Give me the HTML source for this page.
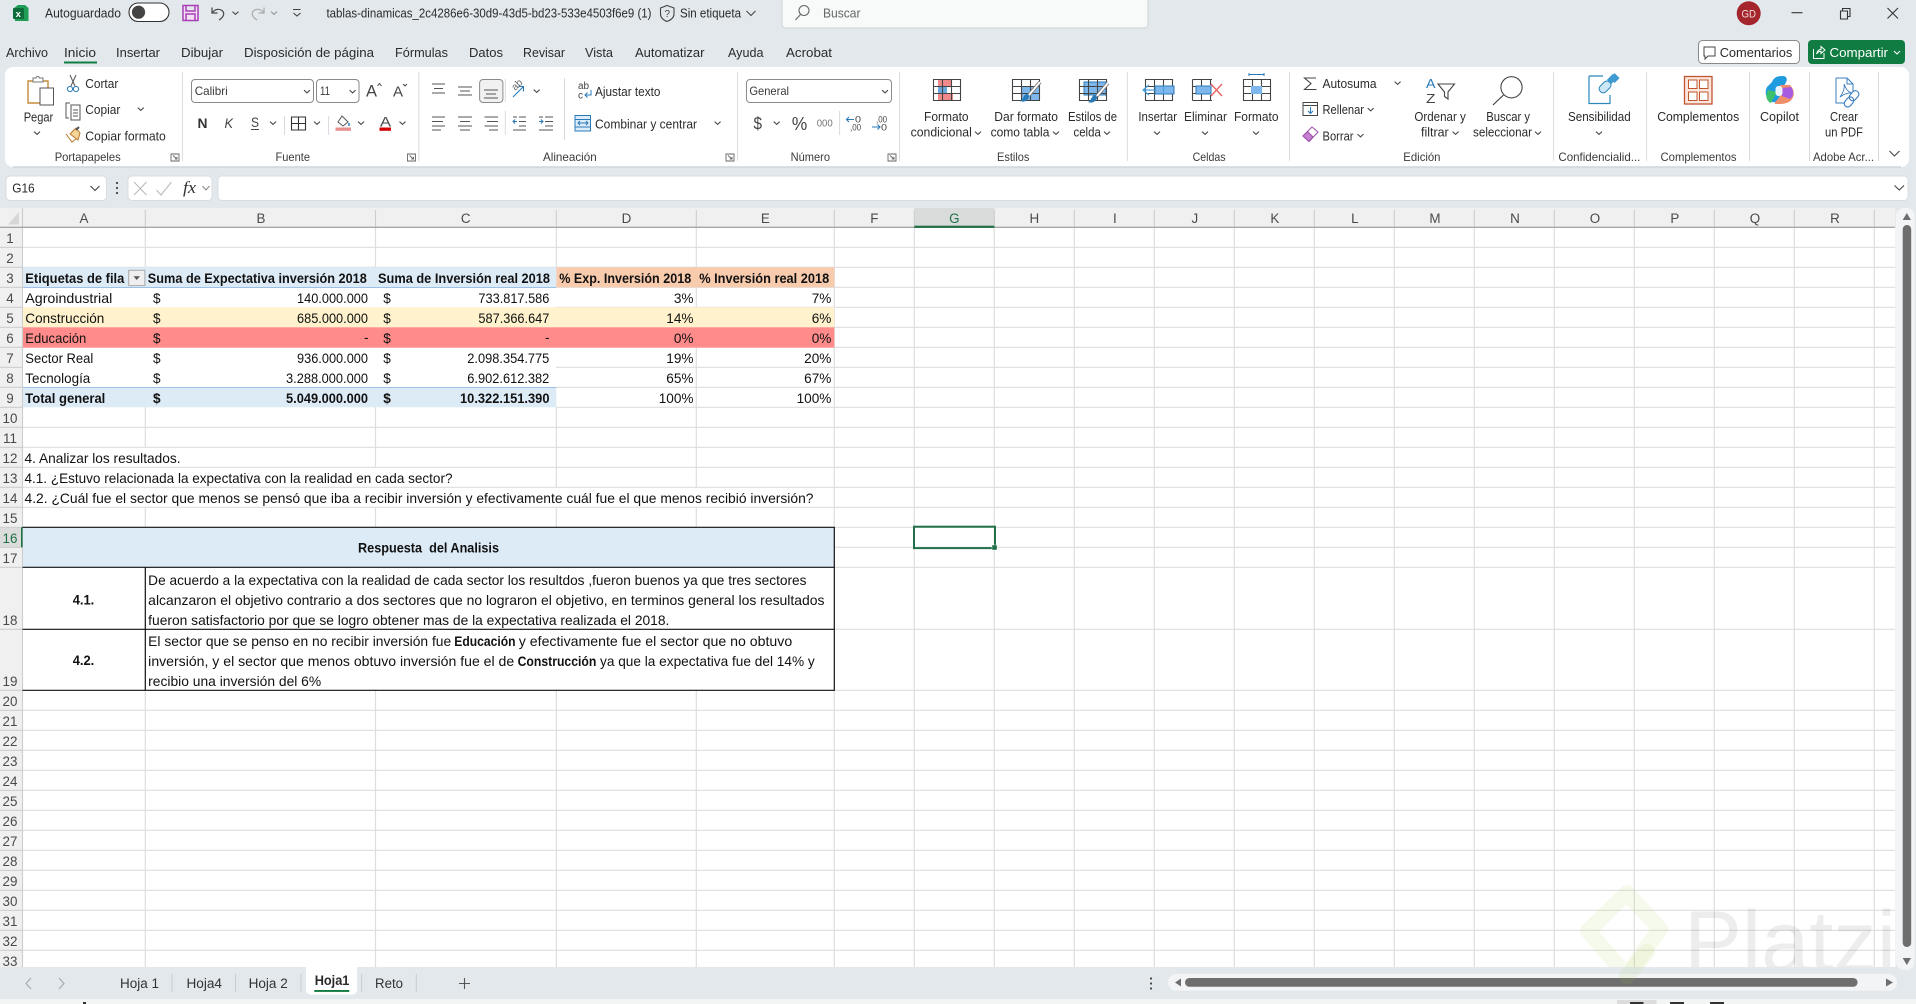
<!DOCTYPE html>
<html lang="es"><head><meta charset="utf-8"><title>Excel</title>
<style>
html,body{margin:0;padding:0;background:#e2e8ec;overflow:hidden}
svg{display:block}
text{font-family:"Liberation Sans",sans-serif;white-space:pre}
.u{font-size:12.6px;fill:#2b2b2b}
.m{font-size:13px;fill:#2b2b2b}
.g{font-size:12px;fill:#3a3a3a}
.c{font-size:13.6px;fill:#111}
.b{font-size:13.6px;fill:#111;font-weight:bold}
.h{font-size:13.4px;fill:#4a4a4a;text-anchor:middle}
.t{font-size:13.4px;fill:#333}
.ln{fill:none;stroke:#555;stroke-width:1}
</style></head><body>
<svg xmlns="http://www.w3.org/2000/svg" width="1916" height="1004" viewBox="0 0 1916 1004">
<defs><path id="ch" d="M-3-1.4 0 1.4 3-1.4" fill="none" stroke="#444" stroke-width="1.1"/>
<path id="dl" d="M0 0H8V7H0ZM2 1.5 6 5M6 2.8V5H3.8" fill="none" stroke="#666" stroke-width=".9"/>
<path id="gr" d="M.5.5H27.5V21.5H.5ZM.5 7.5H27.5M.5 14.5H27.5M9.5.5V21.5M18.5.5V21.5" fill="none" stroke="#444" stroke-width="1.1"/></defs>
<rect width="1916" height="1004" fill="#e2e8ec"/>

<!-- title bar -->
<path d="M14 8 18 5H25L28.5 8V21H15Z" fill="#1f9d57"/><rect x="13" y="8" width="11" height="11" rx="1" fill="#0f6b3a"/><text x="15.6" y="17" font-size="9.5" font-weight="bold" fill="#fff">x</text>
<text class="u" x="45" y="17.5" textLength="76" lengthAdjust="spacingAndGlyphs">Autoguardado</text>
<rect x="129" y="3" width="40" height="18.5" rx="9.2" fill="#fff" stroke="#333" stroke-width="1.1"/><circle cx="138.5" cy="12.2" r="6.6" fill="#444"/>
<path d="M183 5.5H198V20.5H183ZM186 5.5V11H195V5.5M186 20.5V14H195V20.5" fill="#f5e0f5" stroke="#a93fb8" stroke-width="1.5"/>
<path d="M212 7.5V13H217.5M212.5 12.5C215 9 219 8.5 222 10.5 225 13 224 17 219 20" fill="none" stroke="#444" stroke-width="1.2"/><use href="#ch" x="235.5" y="13"/>
<path d="M264 7.5V13H258.5M263.5 12.5C261 9 257 8.5 254 10.5 251 13 252 17 257 20" fill="none" stroke="#aaa" stroke-width="1.2"/><use href="#ch" x="274" y="13" opacity=".5"/>
<path d="M293 9.5H300.5M293.5 13 297 16 300.5 13" fill="none" stroke="#444" stroke-width="1.1"/>
<text class="u" x="326.5" y="17.5" textLength="325" lengthAdjust="spacingAndGlyphs">tablas-dinamicas_2c4286e6-30d9-43d5-bd23-533e4503f6e9 (1)</text>
<path d="M667 5.5 674 8V14C674 17.5 671 20 667 21.5 663 20 660.5 17.5 660.5 14V8Z" fill="none" stroke="#444" stroke-width="1.1"/><text x="664.5" y="17" font-size="10" fill="#444">?</text>
<text class="u" x="680" y="17.5" textLength="61" lengthAdjust="spacingAndGlyphs">Sin etiqueta</text>
<path d="M746.5 11 751 15.5 755.5 11" fill="none" stroke="#444" stroke-width="1.1"/>
<rect x="782" y="-6" width="366" height="34" rx="4" fill="#f8f9f9" stroke="#d0d5d8"/>
<circle cx="804" cy="10.5" r="5" fill="none" stroke="#666" stroke-width="1.1"/><path d="M800.5 14.5 795.5 20" stroke="#666" stroke-width="1.1"/>
<text class="u" x="823" y="17.5" textLength="37.5" lengthAdjust="spacingAndGlyphs" style="fill:#666">Buscar</text>
<circle cx="1748.7" cy="13.3" r="12" fill="#a4262c"/><text x="1741.5" y="17.5" font-size="11" fill="#f0dcdc" textLength="14.5" lengthAdjust="spacingAndGlyphs">GD</text>
<path d="M1791.5 12.7H1802.5" stroke="#333" stroke-width="1.1"/>
<path d="M1840.5 11H1847.5V19H1840.5ZM1842.5 11V8.5H1850V16.5H1847.5" fill="none" stroke="#333" stroke-width="1.1"/>
<path d="M1887.5 8 1898 18.5M1898 8 1887.5 18.5" stroke="#333" stroke-width="1.1"/>

<!-- menu -->
<text class="m" x="6" y="57" textLength="42" lengthAdjust="spacingAndGlyphs">Archivo</text>
<text class="m" x="64" y="57" textLength="32" lengthAdjust="spacingAndGlyphs">Inicio</text>
<text class="m" x="116" y="57" textLength="44" lengthAdjust="spacingAndGlyphs">Insertar</text>
<text class="m" x="181" y="57" textLength="42" lengthAdjust="spacingAndGlyphs">Dibujar</text>
<text class="m" x="244" y="57" textLength="130" lengthAdjust="spacingAndGlyphs">Disposición de página</text>
<text class="m" x="395" y="57" textLength="53" lengthAdjust="spacingAndGlyphs">Fórmulas</text>
<text class="m" x="469" y="57" textLength="34" lengthAdjust="spacingAndGlyphs">Datos</text>
<text class="m" x="523" y="57" textLength="42" lengthAdjust="spacingAndGlyphs">Revisar</text>
<text class="m" x="585" y="57" textLength="28" lengthAdjust="spacingAndGlyphs">Vista</text>
<text class="m" x="635" y="57" textLength="69.5" lengthAdjust="spacingAndGlyphs">Automatizar</text>
<text class="m" x="728" y="57" textLength="35.5" lengthAdjust="spacingAndGlyphs">Ayuda</text>
<text class="m" x="786" y="57" textLength="46" lengthAdjust="spacingAndGlyphs">Acrobat</text>
<rect x="64" y="61.5" width="33" height="2" fill="#107c41"/>
<rect x="1698.5" y="40.5" width="101" height="23" rx="4" fill="#fff" stroke="#8a8a8a"/>
<path d="M1704 47H1715V56H1708L1705 59V56H1704Z" fill="none" stroke="#444" stroke-width="1"/>
<text class="m" x="1719.7" y="57" textLength="72.6" lengthAdjust="spacingAndGlyphs">Comentarios</text>
<rect x="1808" y="40" width="97" height="24" rx="4" fill="#107c41"/>
<path d="M1813.5 49V58.5H1824V53M1816.5 54C1817.5 50.5 1819 49.5 1821 49.2V46.5L1825 50 1821 53.5V51.2C1819 51.3 1817.5 52.3 1816.5 54Z" fill="none" stroke="#fff" stroke-width="1"/>
<text class="m" x="1829.5" y="57" textLength="58.5" lengthAdjust="spacingAndGlyphs" style="fill:#fff">Compartir</text>
<path d="M1894 51 1897 54 1900 51" fill="none" stroke="#fff" stroke-width="1.1"/>

<!-- ribbon -->
<rect x="5" y="67" width="1904" height="100" rx="8" fill="#fff"/>
<path d="M13 167H1901" stroke="#cfd6da" stroke-width="1.5"/>
<path d="M182.4 72V161M418.8 72V161M737.6 72V161M899.6 72V161M1127.3 72V161M1289.5 72V161M1553.6 72V161M1646.6 72V161M1749.5 72V161M1809.5 72V161M1878.5 72V161" stroke="#d8dbdd"/>
<path d="M505.3 79V102M505.3 111V135M564.5 78V140M284.5 116V135M328.6 116V135M839.6 111V135" stroke="#d8dbdd"/>

<!-- clipboard -->
<path d="M28 81H48V103H28Z" fill="#fff" stroke="#c58a3a" stroke-width="1.4"/><path d="M33 81V78H36C36.5 76 39 76 39.5 78H43V82H33Z" fill="#fff" stroke="#777"/>
<rect x="40" y="88" width="13.5" height="17" fill="#fff" stroke="#555"/>
<text class="u" x="23.7" y="121.5" textLength="29.5" lengthAdjust="spacingAndGlyphs">Pegar</text><use href="#ch" x="37" y="133"/>
<path d="M70 75 75 86M76 75 71 86" stroke="#555" fill="none"/><circle cx="70" cy="89" r="2.6" fill="none" stroke="#2a7ab8"/><circle cx="76" cy="89" r="2.6" fill="none" stroke="#2a7ab8"/>
<text class="u" x="85.3" y="88" textLength="33" lengthAdjust="spacingAndGlyphs">Cortar</text>
<path d="M70 103H66V118H69M71 105H80V120H71ZM73 110H78M73 113H78M73 116H78" fill="none" stroke="#555"/>
<text class="u" x="85.3" y="114.2" textLength="35" lengthAdjust="spacingAndGlyphs">Copiar</text><use href="#ch" x="140.8" y="109"/>
<path d="M76 128 70 134 78 140 80 133Z" fill="#f5d59a" stroke="#b9772a"/><path d="M66 134 72 142 76 139" fill="none" stroke="#b9772a"/><path d="M76 130 79 127" stroke="#555" stroke-width="2"/>
<text class="u" x="85.3" y="140.3" textLength="80.5" lengthAdjust="spacingAndGlyphs">Copiar formato</text>
<text class="g" x="54.7" y="161" textLength="66" lengthAdjust="spacingAndGlyphs">Portapapeles</text><use href="#dl" x="171" y="154"/>

<!-- font -->
<rect x="191.5" y="79.5" width="122" height="23" rx="3.5" fill="#fff" stroke="#8a8a8a"/>
<text class="g" x="194.7" y="95" textLength="33" lengthAdjust="spacingAndGlyphs">Calibri</text><use href="#ch" x="307" y="91.5"/>
<rect x="316.5" y="79.5" width="42.5" height="23" rx="3.5" fill="#fff" stroke="#8a8a8a"/>
<text class="g" x="320" y="95" textLength="10" lengthAdjust="spacingAndGlyphs">11</text><use href="#ch" x="352.6" y="91.5"/>
<text x="366" y="96.5" font-size="17" fill="#444" textLength="11" lengthAdjust="spacingAndGlyphs">A</text><path d="M377.5 86 379.5 83.5 381.5 86" fill="none" stroke="#444"/>
<text x="393" y="96.5" font-size="15" fill="#444" textLength="10" lengthAdjust="spacingAndGlyphs">A</text><path d="M403 84 405 86 407 84" fill="none" stroke="#444"/>
<text x="197.5" y="128" font-size="14" font-weight="bold" fill="#333" textLength="10" lengthAdjust="spacingAndGlyphs">N</text>
<text x="224.5" y="128" font-size="14" font-style="italic" fill="#444" textLength="8.5" lengthAdjust="spacingAndGlyphs">K</text>
<text x="251" y="127" font-size="14" fill="#444" textLength="8" lengthAdjust="spacingAndGlyphs">S</text><path d="M251 129.5H259" stroke="#444"/><use href="#ch" x="273" y="123"/>
<path d="M291.5 117H305.5V130H291.5ZM298.5 117V130M291.5 123.5H305.5" fill="none" stroke="#333" stroke-width="1.1"/><use href="#ch" x="317" y="123"/>
<path d="M342 116 348 122 343 126 338 122Z" fill="none" stroke="#555"/><path d="M349 123V126" stroke="#2a7ab8" stroke-width="1.5"/>
<rect x="335.5" y="127.5" width="15.5" height="3.3" fill="#e98f8f"/><use href="#ch" x="361" y="123"/>
<text x="380" y="126.5" font-size="14" fill="#444" textLength="11" lengthAdjust="spacingAndGlyphs">A</text><rect x="379.5" y="127.5" width="11.5" height="3.3" fill="#d40000"/>
<use href="#ch" x="402.5" y="123"/>
<text class="g" x="275.5" y="161" textLength="34.5" lengthAdjust="spacingAndGlyphs">Fuente</text><use href="#dl" x="407.5" y="154"/>

<!-- alignment -->
<rect x="479.6" y="79.5" width="23.3" height="23" rx="3.5" fill="#f1f1f1" stroke="#8a8a8a"/>
<path d="M432 85H445M434 89.5H443M432 94H445" class="ln" transform="translate(0 -1)"/>
<path d="M458 88H472M460 92H470M458 96H472" class="ln" transform="translate(0 -1)"/>
<path d="M484 90H498M486 94H496M484 98H498" class="ln"/>
<path d="M513 97 523 87M518.5 86.5H523.5V91.5" fill="none" stroke="#2a7ab8" stroke-width="1.1"/><text x="512" y="89" font-size="10" fill="#666" transform="rotate(-45 516 86)">ab</text>
<use href="#ch" x="536.7" y="91"/>
<path d="M432 117H445M432 121.5H443M432 126H445M432 130H441" class="ln"/>
<path d="M458 117H472M460 121.5H470M458 126H472M460 130H470" class="ln"/>
<path d="M484.5 117H498M487 121.5H498M484.5 126H498M489 130H498" class="ln"/>
<path d="M519 117H526M519 121.5H526M519 126H526M513 130H526" class="ln"/><path d="M517 121.5H513M515 119.5 513 121.5 515 123.5" fill="none" stroke="#2a7ab8"/><path d="M513 117H517" stroke="#555"/>
<path d="M545 117H553M545 121.5H553M545 126H553M539 130H553" class="ln"/><path d="M539 121.5H543M541 119.5 543 121.5 541 123.5" fill="none" stroke="#2a7ab8"/><path d="M539 117H543" stroke="#555"/>
<text x="578" y="89" font-size="10" fill="#444">ab</text><text x="578" y="98.5" font-size="10" fill="#444">c</text><path d="M591 90V95H585M587.5 92.5 585 95 587.5 97.5" fill="none" stroke="#2a7ab8"/>
<text class="u" x="595" y="96" textLength="65.4" lengthAdjust="spacingAndGlyphs">Ajustar texto</text>
<rect x="575" y="115.5" width="15.5" height="15.5" fill="#dcecf8" stroke="#2a7ab8"/><path d="M575 119.5H590.5M575 127H590.5M578 123H588M580 121 578 123 580 125M586 121 588 123 586 125" fill="none" stroke="#2a7ab8"/>
<text class="u" x="595" y="128.3" textLength="102" lengthAdjust="spacingAndGlyphs">Combinar y centrar</text><use href="#ch" x="717.6" y="123"/>
<text class="g" x="543" y="161" textLength="53.7" lengthAdjust="spacingAndGlyphs">Alineación</text><use href="#dl" x="726" y="154"/>

<!-- number -->
<rect x="746.5" y="79.5" width="145" height="23" rx="3.5" fill="#fff" stroke="#8a8a8a"/>
<text class="g" x="749.4" y="95" textLength="39.6" lengthAdjust="spacingAndGlyphs">General</text><use href="#ch" x="885" y="91.5"/>
<text x="753.5" y="129.5" font-size="17.5" fill="#444" textLength="8.5" lengthAdjust="spacingAndGlyphs">$</text><use href="#ch" x="776.7" y="123"/>
<text x="791.8" y="130" font-size="18" fill="#444" textLength="15.5" lengthAdjust="spacingAndGlyphs">%</text>
<text x="816.7" y="126.5" font-size="10" fill="#777" textLength="16" lengthAdjust="spacingAndGlyphs">000</text>
<text x="855" y="122.5" font-size="9" fill="#444" textLength="6" lengthAdjust="spacingAndGlyphs">0</text><text x="850" y="130.5" font-size="9" fill="#444" textLength="11" lengthAdjust="spacingAndGlyphs">,00</text><path d="M854 119.5H846.5M849 117 846.5 119.5 849 122" fill="none" stroke="#2a7ab8" stroke-width="1.1"/>
<text x="876" y="122.5" font-size="9" fill="#444" textLength="11" lengthAdjust="spacingAndGlyphs">,00</text><text x="881" y="130.5" font-size="9" fill="#444" textLength="6" lengthAdjust="spacingAndGlyphs">0</text><path d="M872 127H880M877.5 124.5 880 127 877.5 129.5" fill="none" stroke="#2a7ab8" stroke-width="1.1"/>
<text class="g" x="790.6" y="161" textLength="39.4" lengthAdjust="spacingAndGlyphs">Número</text><use href="#dl" x="888" y="154"/>

<!-- styles -->
<g transform="translate(933 79)"><rect x="5" y="0" width="13" height="7" fill="#f08a8a"/><rect x="5" y="7" width="9" height="7" fill="#6aa8de"/><rect x="5" y="14" width="15" height="8" fill="#f08a8a"/><use href="#gr"/></g>
<text class="u" x="924" y="120.8" textLength="44.6" lengthAdjust="spacingAndGlyphs">Formato</text>
<text class="u" x="910.6" y="136.5" textLength="61.2" lengthAdjust="spacingAndGlyphs">condicional</text><use href="#ch" x="978" y="133"/>
<g transform="translate(1012 79)"><rect x="9" y="7" width="18" height="15" fill="#7db7ec"/><use href="#gr"/><path d="M28 3 17 16" stroke="#777" stroke-width="3.6" fill="none"/><path d="M28 3 17 16" stroke="#fff" stroke-width="1.8" fill="none"/><path d="M14 15C17 15 18 18 16 20 14 23 10 23 8 22 11 21 11 17 14 15Z" fill="#2a7ab8"/></g>
<text class="u" x="994.3" y="120.8" textLength="63.7" lengthAdjust="spacingAndGlyphs">Dar formato</text>
<text class="u" x="990.6" y="136.5" textLength="58.8" lengthAdjust="spacingAndGlyphs">como tabla</text><use href="#ch" x="1056" y="133"/>
<g transform="translate(1079 79)"><rect x="5" y="3" width="22" height="13" fill="#7db7ec" stroke="#2a7ab8"/><use href="#gr"/><path d="M29 4 18 17" stroke="#777" stroke-width="3.6" fill="none"/><path d="M29 4 18 17" stroke="#fff" stroke-width="1.8" fill="none"/><path d="M15 16C18 16 19 19 17 21 15 24 11 24 9 23 12 22 12 18 15 16Z" fill="#2a7ab8"/></g>
<text class="u" x="1068" y="120.8" textLength="49" lengthAdjust="spacingAndGlyphs">Estilos de</text>
<text class="u" x="1073.5" y="136.5" textLength="27.3" lengthAdjust="spacingAndGlyphs">celda</text><use href="#ch" x="1107" y="133"/>
<text class="g" x="997" y="161" textLength="32.4" lengthAdjust="spacingAndGlyphs">Estilos</text>

<!-- cells -->
<g transform="translate(1145 79)"><use href="#gr"/><rect x="10" y="7" width="19" height="8" fill="#7db7ec" stroke="#2a7ab8"/><path d="M18.5 7V15M9.5 11H-1M4 6-2 11 4 16" fill="none" stroke="#4aa3e0" stroke-width="1.3"/></g>
<text class="u" x="1138.4" y="121" textLength="38.6" lengthAdjust="spacingAndGlyphs">Insertar</text><use href="#ch" x="1157" y="133"/>
<g transform="translate(1192 79)"><path d="M.5.5H20M.5 21.5H20M.5.5V21.5M.5 7.5H4M.5 14.5H4M9.5.5V21.5M18.5.5V6M18.5 16V21.5" fill="none" stroke="#444" stroke-width="1.1"/><rect x="4" y="7" width="15" height="8" fill="#7db7ec" stroke="#2a7ab8"/><path d="M19 5 30 17M30 5 19 17" stroke="#e86060" stroke-width="1.3"/></g>
<text class="u" x="1184" y="121" textLength="43" lengthAdjust="spacingAndGlyphs">Eliminar</text><use href="#ch" x="1205" y="133"/>
<g transform="translate(1243 79)"><use href="#gr"/><rect x="8" y="7" width="11" height="8" fill="#7db7ec"/></g><path d="M1249 73V76M1249 74.5H1264M1264 73V76" stroke="#2a7ab8" fill="none"/>
<text class="u" x="1234" y="121" textLength="44.5" lengthAdjust="spacingAndGlyphs">Formato</text><use href="#ch" x="1256" y="133"/>
<text class="g" x="1192.6" y="161" textLength="33" lengthAdjust="spacingAndGlyphs">Celdas</text>

<!-- editing -->
<path d="M1316 78H1304.5L1311 83.5 1304.5 89.5H1316.5" fill="none" stroke="#444" stroke-width="1.1"/>
<text class="u" x="1322.5" y="88" textLength="54" lengthAdjust="spacingAndGlyphs">Autosuma</text><use href="#ch" x="1397.6" y="83"/>
<rect x="1303" y="102.5" width="14.5" height="13" fill="#fff" stroke="#444"/><path d="M1303 105.5H1317.5" stroke="#444"/><path d="M1310.5 107V113.5M1308 111 1310.5 113.5 1313 111" fill="none" stroke="#2a7ab8" stroke-width="1.1"/>
<text class="u" x="1322.5" y="114.2" textLength="41.5" lengthAdjust="spacingAndGlyphs">Rellenar</text><use href="#ch" x="1370.7" y="109.5"/>
<path d="M1303 136 1312 127 1318 132 1309 141.5Z" fill="#fff" stroke="#9a4ea8"/><path d="M1303 136 1307.5 131.5 1313 137 1309 141.5Z" fill="#c77fd2" stroke="#9a4ea8"/>
<text class="u" x="1322.5" y="140.3" textLength="31" lengthAdjust="spacingAndGlyphs">Borrar</text><use href="#ch" x="1360.5" y="135.5"/>
<text x="1426" y="88" font-size="12.5" fill="#2a7ab8" textLength="9.5" lengthAdjust="spacingAndGlyphs">A</text><text x="1426" y="103" font-size="12.5" fill="#444" textLength="9.5" lengthAdjust="spacingAndGlyphs">Z</text>
<path d="M1438 84H1454.5L1448 92V99L1444.5 96.5V92Z" fill="none" stroke="#444" stroke-width="1.1"/>
<text class="u" x="1414.4" y="120.8" textLength="51.4" lengthAdjust="spacingAndGlyphs">Ordenar y</text>
<text class="u" x="1421" y="136.5" textLength="27.7" lengthAdjust="spacingAndGlyphs">filtrar</text><use href="#ch" x="1455.6" y="133"/>
<circle cx="1511.5" cy="87.3" r="10.6" fill="none" stroke="#444" stroke-width="1.1"/><path d="M1503.5 95 1493 105" stroke="#444" stroke-width="1.2"/>
<text class="u" x="1486.2" y="120.8" textLength="43.8" lengthAdjust="spacingAndGlyphs">Buscar y</text>
<text class="u" x="1473" y="136.5" textLength="59" lengthAdjust="spacingAndGlyphs">seleccionar</text><use href="#ch" x="1538" y="133"/>
<text class="g" x="1403.3" y="161" textLength="37.2" lengthAdjust="spacingAndGlyphs">Edición</text>

<!-- sensitivity -->
<path d="M1589 76H1603M1589 76V103.5H1610V95" fill="none" stroke="#2a88bc" stroke-width="1.2"/>
<g transform="rotate(45 1604 88)"><rect x="1600" y="80" width="8" height="13" rx="3.5" fill="#cde7f6" stroke="#2a88bc"/><rect x="1601" y="70" width="7" height="7" fill="#3d9bd0"/></g><rect x="1609" y="75" width="6" height="8" fill="#3d9bd0" transform="rotate(45 1612 79)"/>
<text class="u" x="1568" y="120.8" textLength="62.7" lengthAdjust="spacingAndGlyphs">Sensibilidad</text><use href="#ch" x="1599" y="133"/>
<text class="g" x="1558.4" y="161" textLength="82" lengthAdjust="spacingAndGlyphs">Confidencialid...</text>
<!-- add-ins -->
<rect x="1684.5" y="76.5" width="27.5" height="27.5" fill="#fbe6dc" stroke="#c0552f" stroke-width="1.3"/><rect x="1688.5" y="80" width="8.5" height="8.5" fill="#fff" stroke="#c0552f"/><rect x="1699.5" y="80" width="8.5" height="8.5" fill="#fff" stroke="#c0552f"/><rect x="1688.5" y="92" width="8.5" height="8.5" fill="#fff" stroke="#c0552f"/><rect x="1699.5" y="92" width="8.5" height="8.5" fill="#fff" stroke="#c0552f"/>
<text class="u" x="1657.2" y="120.8" textLength="82" lengthAdjust="spacingAndGlyphs">Complementos</text>
<text class="g" x="1660.5" y="161" textLength="76" lengthAdjust="spacingAndGlyphs">Complementos</text>
<!-- copilot -->
<path d="M1772 82C1774 77 1778 76 1783 76 1787 76 1788 80 1785 84L1778 100C1776 103 1771 103 1769 100 1765 96 1765 91 1767 87Z" fill="#1f9ce0"/><path d="M1768 90 1777 92 1771 103C1766 101 1765 95 1768 90Z" fill="#3fc06a"/><path d="M1780 85 1790 85C1794 89 1795 95 1792 99 1789 104 1782 104 1776 104 1772 104 1778 100 1780 96Z" fill="#f08e6a"/><path d="M1782 88 1791 87C1794 91 1794 96 1790 99L1782 96Z" fill="#a65be0"/><rect x="1775.5" y="86" width="7" height="10" rx="3" fill="#e9f4fb"/>
<text class="u" x="1760" y="120.8" textLength="39" lengthAdjust="spacingAndGlyphs">Copilot</text>
<!-- pdf -->
<path d="M1836 78H1847L1853 84V92M1836 78V103H1845M1847 78V84H1853" fill="none" stroke="#3a7fc2" stroke-width="1"/><path d="M1840 97C1843 93 1845 88 1844 84 1846 89 1848 92 1852 93 1848 92.5 1844 94 1840 97Z" fill="none" stroke="#3a7fc2" stroke-width=".9"/>
<rect x="1851" y="90" width="7" height="11" rx="3.5" fill="none" stroke="#3a7fc2" stroke-width="1.1" transform="rotate(40 1854 95)"/><rect x="1845.5" y="96.5" width="7" height="11" rx="3.5" fill="none" stroke="#3a7fc2" stroke-width="1.1" transform="rotate(40 1849 102)"/>
<text class="u" x="1830" y="120.8" textLength="28" lengthAdjust="spacingAndGlyphs">Crear</text>
<text class="u" x="1825" y="136.5" textLength="38" lengthAdjust="spacingAndGlyphs">un PDF</text>
<text class="g" x="1813" y="161" textLength="61" lengthAdjust="spacingAndGlyphs">Adobe Acr...</text>
<path d="M1889.5 151 1894.4 156 1899.5 151" fill="none" stroke="#444" stroke-width="1.1"/>

<!-- formula bar -->
<rect x="6" y="176" width="100.5" height="24.5" rx="4" fill="#fff" stroke="#d8dcdf"/>
<text class="u" x="12.2" y="192.5" textLength="22.5" lengthAdjust="spacingAndGlyphs">G16</text><path d="M90.5 186 95 190.5 99.5 186" fill="none" stroke="#444" stroke-width="1.1"/>
<circle cx="117" cy="183" r="1.1" fill="#444"/><circle cx="117" cy="188" r="1.1" fill="#444"/><circle cx="117" cy="193" r="1.1" fill="#444"/>
<rect x="128" y="176" width="84" height="24.5" rx="4" fill="#fff" stroke="#d8dcdf"/>
<path d="M134 182 146.5 195M146.5 182 134 195" stroke="#bbb" stroke-width="1.1"/><path d="M156.5 190 161 195 171.5 182" fill="none" stroke="#bbb" stroke-width="1.1"/>
<text x="183" y="193" style="font-family:'Liberation Serif',serif" font-style="italic" font-size="17" fill="#333" textLength="13" lengthAdjust="spacingAndGlyphs">fx</text>
<path d="M202.5 186 206 190 209.5 186" fill="none" stroke="#888"/>
<rect x="218" y="176" width="1690" height="24.5" rx="4" fill="#fff" stroke="#d8dcdf"/><path d="M1894.5 185.5 1899.3 190 1904 185.5" fill="none" stroke="#444" stroke-width="1.1"/>

<!-- sheet -->
<rect x="22.5" y="227" width="1873" height="740" fill="#fff"/>
<rect x="0" y="208" width="1895" height="19.3" fill="#f0f0f0"/>
<rect x="0" y="208" width="22.5" height="759" fill="#f0f0f0"/>
<rect x="914.3" y="208" width="80" height="19" fill="#dadcdc"/>
<rect x="0" y="527.3" width="22" height="20" fill="#dcdcdc"/>
<path d="M8 224.5 19 224.5 19 212Z" fill="#d7d7d7"/>
<!-- gridlines -->
<g stroke="#dedede" stroke-width="1.2" fill="none">
<path d="M22 247.3H1895M22 267.3H1895M556 287.3H1895M556 307.3H1895M834 327.3H1895M834 347.3H1895M556 367.3H1895M556 387.3H1895M556 407.3H1895M22 427.3H1895M22 447.3H1895M22 467.3H1895M22 487.3H1895M22 507.3H1895M22 527.3H1895M834 547.3H1895M834 567.3H1895M834 629.3H1895M834 690.3H1895M22 710.3H1895M22 730.3H1895M22 750.3H1895M22 770.3H1895M22 790.3H1895M22 810.3H1895M22 830.3H1895M22 850.3H1895M22 870.3H1895M22 890.3H1895M22 910.3H1895M22 930.3H1895M22 950.3H1895"/>
<path d="M145.3 227V267M145.3 407V447M145.3 507V527M145.3 690V967"/>
<path d="M375.5 227V267M375.5 407V467M375.5 507V527M375.5 690V967"/>
<path d="M556.3 227V267M556.3 407V487M556.3 507V527M556.3 690V967"/>
<path d="M696.3 227V267M696.3 287V487M696.3 507V527M696.3 690V967"/>
<path d="M834.3 227V527M834.3 690V967"/>
<path d="M914.3 227V967M994.3 227V967M1074.3 227V967M1154.3 227V967M1234.3 227V967M1314.3 227V967M1394.3 227V967M1474.3 227V967M1554.3 227V967M1634.3 227V967M1714.3 227V967M1794.3 227V967M1874.3 227V967"/>
</g>
<!-- header separators -->
<g stroke="#cdcdcd" stroke-width="1.1">
<path d="M22.5 208V967M145.3 210V227M375.5 210V227M556.3 210V227M696.3 210V227M834.3 210V227M914.3 210V227M994.3 210V227M1074.3 210V227M1154.3 210V227M1234.3 210V227M1314.3 210V227M1394.3 210V227M1474.3 210V227M1554.3 210V227M1634.3 210V227M1714.3 210V227M1794.3 210V227M1874.3 210V227"/>
<path d="M0 247.3H22M0 267.3H22M0 287.3H22M0 307.3H22M0 327.3H22M0 347.3H22M0 367.3H22M0 387.3H22M0 407.3H22M0 427.3H22M0 447.3H22M0 467.3H22M0 487.3H22M0 507.3H22M0 527.3H22M0 547.3H22M0 567.3H22M0 629.3H22M0 690.3H22M0 710.3H22M0 730.3H22M0 750.3H22M0 770.3H22M0 790.3H22M0 810.3H22M0 830.3H22M0 850.3H22M0 870.3H22M0 890.3H22M0 910.3H22M0 930.3H22M0 950.3H22"/>
</g>
<path d="M0 227.3H1895" stroke="#a8a8a8" stroke-width="1.3"/>
<rect x="914.3" y="225.7" width="80" height="2.2" fill="#1f7145"/>
<rect x="21" y="527.3" width="1.6" height="20" fill="#1f7145"/>
<!-- column letters -->
<text class="h" x="84" y="223">A</text><text class="h" x="261" y="223">B</text><text class="h" x="465.7" y="223">C</text><text class="h" x="626.5" y="223">D</text><text class="h" x="765.3" y="223">E</text><text class="h" x="874.3" y="223">F</text><text class="h" x="954.3" y="223" style="fill:#1f7145">G</text><text class="h" x="1034.3" y="223">H</text><text class="h" x="1114.9" y="223">I</text><text class="h" x="1194.9" y="223">J</text><text class="h" x="1274.9" y="223">K</text><text class="h" x="1354.9" y="223">L</text><text class="h" x="1434.9" y="223">M</text><text class="h" x="1514.9" y="223">N</text><text class="h" x="1594.9" y="223">O</text><text class="h" x="1674.9" y="223">P</text><text class="h" x="1754.9" y="223">Q</text><text class="h" x="1834.9" y="223">R</text>
<!-- row numbers -->
<text class="h" x="10" y="243">1</text><text class="h" x="10" y="263">2</text><text class="h" x="10" y="283">3</text><text class="h" x="10" y="303">4</text><text class="h" x="10" y="323">5</text><text class="h" x="10" y="343">6</text><text class="h" x="10" y="363">7</text><text class="h" x="10" y="383">8</text><text class="h" x="10" y="403">9</text><text class="h" x="10" y="423">10</text><text class="h" x="10" y="443">11</text><text class="h" x="10" y="463">12</text><text class="h" x="10" y="483">13</text><text class="h" x="10" y="503">14</text><text class="h" x="10" y="523">15</text><text class="h" x="10" y="543" style="fill:#1f7145">16</text><text class="h" x="10" y="563">17</text><text class="h" x="10" y="625">18</text><text class="h" x="10" y="686">19</text><text class="h" x="10" y="706">20</text><text class="h" x="10" y="726">21</text><text class="h" x="10" y="746">22</text><text class="h" x="10" y="766">23</text><text class="h" x="10" y="786">24</text><text class="h" x="10" y="806">25</text><text class="h" x="10" y="826">26</text><text class="h" x="10" y="846">27</text><text class="h" x="10" y="866">28</text><text class="h" x="10" y="886">29</text><text class="h" x="10" y="906">30</text><text class="h" x="10" y="926">31</text><text class="h" x="10" y="946">32</text><text class="h" x="10" y="966">33</text>

<!-- pivot fills -->
<rect x="23" y="267.3" width="533.3" height="20" fill="#ddebf7"/>
<rect x="556.3" y="267.3" width="278" height="20" fill="#f8cbad"/>
<rect x="23" y="307.3" width="811.3" height="20" fill="#fff2cc"/>
<rect x="23" y="327.3" width="811.3" height="20.4" fill="#ff8b8b"/>
<rect x="23" y="387.3" width="533.3" height="20" fill="#ddebf7"/>
<path d="M23 287.5H556.3M23 387.5H556.3" stroke="#9bc2e6" stroke-width="1.1"/>
<rect x="128.7" y="270.3" width="16.2" height="15.3" fill="#efefef" stroke="#a8a8a8"/><path d="M133.5 276.3H140L136.7 280Z" fill="#555"/>

<!-- pivot text -->
<text class="b" x="25.3" y="283" textLength="99" lengthAdjust="spacingAndGlyphs">Etiquetas de fila</text>
<text class="b" x="147.8" y="283" textLength="219" lengthAdjust="spacingAndGlyphs">Suma de Expectativa inversión 2018</text>
<text class="b" x="378" y="283" textLength="172" lengthAdjust="spacingAndGlyphs">Suma de Inversión real 2018</text>
<text class="b" x="559.2" y="283" textLength="132" lengthAdjust="spacingAndGlyphs">% Exp. Inversión 2018</text>
<text class="b" x="699.2" y="283" textLength="130" lengthAdjust="spacingAndGlyphs">% Inversión real 2018</text>
<text class="c" x="25.3" y="303" textLength="87" lengthAdjust="spacingAndGlyphs">Agroindustrial</text>
<text class="c" x="25.3" y="323" textLength="79" lengthAdjust="spacingAndGlyphs">Construcción</text>
<text class="c" x="25.3" y="343" textLength="61" lengthAdjust="spacingAndGlyphs">Educación</text>
<text class="c" x="25.3" y="363" textLength="68" lengthAdjust="spacingAndGlyphs">Sector Real</text>
<text class="c" x="25.3" y="383" textLength="65" lengthAdjust="spacingAndGlyphs">Tecnología</text>
<text class="b" x="25.3" y="403" textLength="80" lengthAdjust="spacingAndGlyphs">Total general</text>
<g>
<text class="c" x="153" y="303">$</text><text class="c" x="383.2" y="303">$</text>
<text class="c" x="153" y="323">$</text><text class="c" x="383.2" y="323">$</text>
<text class="c" x="153" y="343">$</text><text class="c" x="383.2" y="343">$</text>
<text class="c" x="153" y="363">$</text><text class="c" x="383.2" y="363">$</text>
<text class="c" x="153" y="383">$</text><text class="c" x="383.2" y="383">$</text>
<text class="b" x="153" y="403">$</text><text class="b" x="383.2" y="403">$</text>
</g>
<text class="c" x="297" y="303" textLength="71" lengthAdjust="spacingAndGlyphs">140.000.000</text>
<text class="c" x="297" y="323" textLength="71" lengthAdjust="spacingAndGlyphs">685.000.000</text>
<text class="c" x="364" y="342">-</text>
<text class="c" x="297" y="363" textLength="71" lengthAdjust="spacingAndGlyphs">936.000.000</text>
<text class="c" x="286" y="383" textLength="82" lengthAdjust="spacingAndGlyphs">3.288.000.000</text>
<text class="b" x="286" y="403" textLength="82" lengthAdjust="spacingAndGlyphs">5.049.000.000</text>
<text class="c" x="478.4" y="303" textLength="71" lengthAdjust="spacingAndGlyphs">733.817.586</text>
<text class="c" x="478.4" y="323" textLength="71" lengthAdjust="spacingAndGlyphs">587.366.647</text>
<text class="c" x="545" y="342">-</text>
<text class="c" x="467.3" y="363" textLength="82" lengthAdjust="spacingAndGlyphs">2.098.354.775</text>
<text class="c" x="467.3" y="383" textLength="82" lengthAdjust="spacingAndGlyphs">6.902.612.382</text>
<text class="b" x="460" y="403" textLength="89.5" lengthAdjust="spacingAndGlyphs">10.322.151.390</text>
<g text-anchor="end">
<text class="c" x="693.5" y="303">3%</text><text class="c" x="693.5" y="323">14%</text><text class="c" x="693.5" y="343">0%</text><text class="c" x="693.5" y="363">19%</text><text class="c" x="693.5" y="383">65%</text><text class="c" x="693.5" y="403">100%</text>
<text class="c" x="831.4" y="303">7%</text><text class="c" x="831.4" y="323">6%</text><text class="c" x="831.4" y="343">0%</text><text class="c" x="831.4" y="363">20%</text><text class="c" x="831.4" y="383">67%</text><text class="c" x="831.4" y="403">100%</text>
</g>
<text class="c" x="24.5" y="463" textLength="156" lengthAdjust="spacingAndGlyphs">4. Analizar los resultados.</text>
<text class="c" x="24.5" y="483" textLength="428" lengthAdjust="spacingAndGlyphs">4.1. ¿Estuvo relacionada la expectativa con la realidad en cada sector?</text>
<text class="c" x="24.5" y="503" textLength="789" lengthAdjust="spacingAndGlyphs">4.2. ¿Cuál fue el sector que menos se pensó que iba a recibir inversión y efectivamente cuál fue el que menos recibió inversión?</text>

<!-- answer box -->
<rect x="23" y="527.3" width="811.3" height="40" fill="#ddebf7"/>
<path d="M22.5 527.3H834.3V690.3H22.5M22.5 567.3H834.3M22.5 629.3H834.3M145.3 567.3V690.3" fill="none" stroke="#111" stroke-width="1.2"/>
<text class="b" x="358" y="552.5" textLength="141" lengthAdjust="spacingAndGlyphs">Respuesta  del Analisis</text>
<text class="b" x="72.7" y="604.5" textLength="21.6" lengthAdjust="spacingAndGlyphs">4.1.</text>
<text class="b" x="72.7" y="665" textLength="21.6" lengthAdjust="spacingAndGlyphs">4.2.</text>
<text class="c" x="148.2" y="585" textLength="658.3" lengthAdjust="spacingAndGlyphs">De acuerdo a la expectativa con la realidad de cada sector los resultdos ,fueron buenos ya que tres sectores</text>
<text class="c" x="148.2" y="605" textLength="676.3" lengthAdjust="spacingAndGlyphs">alcanzaron el objetivo contrario a dos sectores que no lograron el objetivo, en terminos general los resultados</text>
<text class="c" x="148.2" y="625" textLength="521.2" lengthAdjust="spacingAndGlyphs">fueron satisfactorio por que se logro obtener mas de la expectativa realizada el 2018.</text>
<text class="c" x="148.2" y="646" textLength="303" lengthAdjust="spacingAndGlyphs">El sector que se penso en no recibir inversión fue</text>
<text class="b" x="454.3" y="646" textLength="61.2" lengthAdjust="spacingAndGlyphs">Educación</text>
<text class="c" x="518.8" y="646" textLength="273.4" lengthAdjust="spacingAndGlyphs">y efectivamente fue el sector que no obtuvo</text>
<text class="c" x="148.2" y="666" textLength="366" lengthAdjust="spacingAndGlyphs">inversión, y el sector que menos obtuvo inversión fue el de</text>
<text class="b" x="517.6" y="666" textLength="78.7" lengthAdjust="spacingAndGlyphs">Construcción</text>
<text class="c" x="600" y="666" textLength="214.7" lengthAdjust="spacingAndGlyphs">ya que la expectativa fue del 14% y</text>
<text class="c" x="148.2" y="686" textLength="173" lengthAdjust="spacingAndGlyphs">recibio una inversión del 6%</text>

<!-- selection -->
<rect x="914" y="526.7" width="81" height="21.4" fill="none" stroke="#21704a" stroke-width="2"/>
<rect x="992" y="545" width="5" height="5" fill="#21704a" stroke="#fff" stroke-width=".4"/>

<!-- watermark -->
<path d="M1627 976 1588 931 1627 893 1660 929 1629 972" fill="none" stroke="#a5cf4a" stroke-opacity=".1" stroke-width="16" stroke-linejoin="round" stroke-linecap="round"/>
<text x="1684" y="971" font-size="86" fill="#000" fill-opacity=".07" textLength="212" lengthAdjust="spacingAndGlyphs">Platzi</text>

<!-- sheet tabs -->
<rect x="0" y="967" width="1916" height="32" fill="#e2e8ec"/>
<rect x="1896" y="208" width="20" height="770" fill="#e2e8ec"/>
<path d="M31 978 26 983.5 31 989M59 978 64 983.5 59 989" fill="none" stroke="#a3a8ab" stroke-width="1.1"/>
<text class="t" x="120" y="988" textLength="39" lengthAdjust="spacingAndGlyphs">Hoja 1</text>
<text class="t" x="186.5" y="988" textLength="35.5" lengthAdjust="spacingAndGlyphs">Hoja4</text>
<text class="t" x="248.6" y="988" textLength="39.2" lengthAdjust="spacingAndGlyphs">Hoja 2</text>
<path d="M172 974V992M235.5 974V992M301 974V992M361.6 974V992M416.3 974V992" stroke="#c6ccd0"/>
<path d="M306 967H357V989Q357 994.7 351 994.7H312Q306 994.7 306 989Z" fill="#fff"/>
<text x="314.7" y="985" font-size="13.4" font-weight="bold" fill="#2a2a2a" textLength="34.7" lengthAdjust="spacingAndGlyphs">Hoja1</text>
<rect x="314.3" y="990" width="35" height="1.9" fill="#107c41"/>
<text class="t" x="375" y="988" textLength="28" lengthAdjust="spacingAndGlyphs">Reto</text>
<path d="M464.5 978V989M459 983.5H470" stroke="#555" stroke-width="1.1"/>
<circle cx="1151" cy="978.5" r="1.1" fill="#444"/><circle cx="1151" cy="983.5" r="1.1" fill="#444"/><circle cx="1151" cy="988.5" r="1.1" fill="#444"/>

<!-- scrollbars -->
<rect x="1896" y="208" width="18.7" height="762" rx="8" fill="#f2f4f5"/>
<path d="M1902.7 220 1906.8 213 1911 220Z" fill="#6e6e6e"/>
<rect x="1902.7" y="225" width="8.5" height="722" rx="4.2" fill="#6e6e6e"/>
<path d="M1902.7 958 1906.8 965 1911 958Z" fill="#6e6e6e"/>
<rect x="1168" y="974" width="729" height="16.7" rx="8" fill="#f2f4f5"/>
<path d="M1181 978.5 1175 982.5 1181 986.5Z" fill="#6e6e6e"/>
<rect x="1185" y="978" width="672.6" height="8.7" rx="4.3" fill="#6e6e6e"/>
<path d="M1886 978.5 1893 982.5 1886 986.5Z" fill="#6e6e6e"/>
<path d="M1627 976 1647 952" fill="none" stroke="#a5cf4a" stroke-opacity=".1" stroke-width="16" stroke-linecap="round"/>

<!-- status strip -->
<rect x="0" y="999" width="1916" height="5" fill="#f3f4f4"/>
<rect x="1617" y="1000" width="39.5" height="4" fill="#dcdcdc"/>
<rect x="1630" y="1002" width="13.5" height="2" fill="#333"/><rect x="1670" y="1002" width="14" height="2" fill="#333"/><rect x="1710" y="1002" width="14" height="2" fill="#333"/>
<rect x="83" y="1002" width="3" height="2" fill="#333"/>
</svg>
</body></html>
